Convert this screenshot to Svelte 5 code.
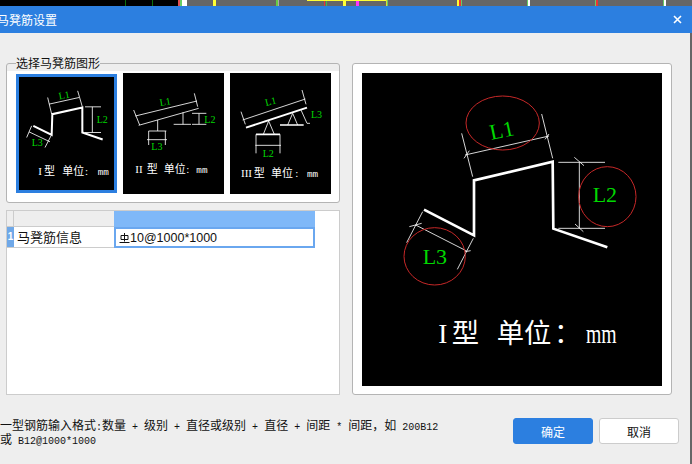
<script>
  // screen behind the dialog: [x, width, colour]
  const ticks = [
    [125, 1, '#0a6e0a'], [152, 1, '#0a6e0a'], [178, 2, '#e05050'], [180, 2, '#66cc66'], [182, 5, '#ffffff'],
    [213, 3, '#ffff33'], [276, 2, '#66cc44'], [278, 1, '#aaaaaa'], [324, 1, '#ee3333'], [326, 1, '#44bb44'],
    [343, 3, '#ffff33'], [356, 3, '#ff33ff'], [386, 1, '#dddd33'], [387, 1, '#66cc66'], [457, 2, '#ffff33'],
    [459, 2, '#ee3333'], [461, 1, '#66cc66'], [527, 1, '#66cc66'], [528, 2, '#ffffff'], [595, 1, '#66cc66'],
    [596, 2, '#ee3333'], [663, 1, '#66cc66'], [664, 2, '#ffffff']
  ];

  const hint = [
    '一型钢筋输入格式:数量 + 级别 + 直径或级别 + 直径 + 间距 * 间距，如 200B12',
    '或 B12@1000*1000'
  ];

  // ascii is half width in the original font, so it gets its own run
  const runs = (s) => s.split(/([\x00-\x7f]+)/).filter(Boolean);
  const isAscii = (s) => /^[\x00-\x7f]+$/.test(s);
</script>

<div class="screen">
  <svg class="behind" width="692" height="6" viewBox="0 0 692 6" aria-hidden="true">
    <rect x="0" y="0" width="178" height="6" fill="#000" />
    {#each ticks as [x, w, c]}
      <rect {x} y="0" width={w} height="6" fill={c} />
    {/each}
    <rect x="307" y="0" width="79" height="1" fill="#ffff33" />
  </svg>

  <header class="titlebar">
    <span class="title">马凳筋设置</span>
    <svg class="close" width="9" height="9" viewBox="0 0 9 9" aria-hidden="true">
      <path d="M1 1 8 8M8 1 1 8" stroke="#fff" stroke-width="1.6" fill="none" />
    </svg>
  </header>

  <main class="body">
    <div class="content">
      <div class="left">
        <fieldset class="shapes">
          <legend>选择马凳筋图形</legend>
          <div class="thumbs">
            <div class="thumb selected">
              <svg viewBox="42 40 285 336" width="95" height="113" aria-hidden="true">
                <polyline class="bar" points="85,185 140,212 142,150 232,130 232,205 293,226" />
                <path class="dim" d="M128 100 140 150M218 80 232 128M132 120 222 100M240 128H288M240 205H288M262 128V205M80 185 65 220M138 215 120 250M72 203 135 233" />
                <text class="lbl" x="163" y="106" transform="rotate(-10 163 106)">L1</text>
                <text class="lbl" x="275" y="177">L2</text>
                <text class="lbl" x="80" y="246">L3</text>
                <text class="cap" y="332"><tspan x="100">I</tspan><tspan x="117">型</tspan><tspan x="172">单位</tspan><tspan x="240">:</tspan><tspan class="mm" x="278">mm</tspan></text>
              </svg>
            </div>
            <div class="thumb">
              <svg viewBox="9 24 301 363" width="101" height="121" aria-hidden="true">
                <path class="dim" d="M45 153 230 108M55 181 235 130M222 85 232 125M40 135 58 180M112 165V198M85 198H138M85 198V240M135 198V240M80 224H140M188 142V178M160 178H212M215 145H258M215 178H258M236 145V178" />
                <text class="lbl" x="120" y="123" transform="rotate(-10 120 123)">L1</text>
                <text class="lbl" x="252" y="175">L2</text>
                <text class="lbl" x="93" y="256">L3</text>
                <text class="cap" y="325"><tspan x="45">II</tspan><tspan x="79">型</tspan><tspan x="130">单位</tspan><tspan x="198">:</tspan><tspan class="mm" x="228">mm</tspan></text>
              </svg>
            </div>
            <div class="thumb">
              <svg viewBox="12 24 303 363" width="101" height="121" aria-hidden="true">
                <line class="bar" x1="60" y1="188" x2="243" y2="128" />
                <path class="dim" d="M50 165 238 102M45 140 58 178M228 75 240 118M128 168 112 208M128 168 145 208M200 145 185 180M200 145 215 180M90 208V265M162 208V265M88 241H165M225 135 243 175H252" />
                <path class="thick" d="M162 180H233M90 208H162" />
                <text class="lbl" x="120" y="123" transform="rotate(-14 120 123)">L1</text>
                <text class="lbl" x="255" y="159">L3</text>
                <text class="lbl" x="110" y="276">L2</text>
                <text class="cap" y="337"><tspan x="45">III</tspan><tspan x="83">型</tspan><tspan x="135">单位</tspan><tspan x="208">:</tspan><tspan class="mm" x="243">mm</tspan></text>
              </svg>
            </div>
          </div>
        </fieldset>

        <div class="table">
          <div class="cell corner"></div>
          <div class="cell head"></div>
          <div class="cell head active"></div>
          <div class="cell rownum">1</div>
          <div class="cell name">马凳筋信息</div>
          <div class="cell value">
            <svg width="11" height="11" viewBox="0 0 11 11" aria-hidden="true">
              <path d="M2 2.5H9V6.5H2ZM5.5 0V8.5M0.5 9.5H10.5" stroke="#111" fill="none" />
            </svg>10@1000*1000
          </div>
        </div>
      </div>

      <section class="preview">
        <svg viewBox="36 39 900 939" width="300" height="313" aria-hidden="true">
          <polyline class="bar big" points="222,449 372,526 372,361 608,305 610,506 772,562" />
          <path class="dim" d="M335 220 368 350M575 162 608 295M345 285 597 228M342 295 358 272M585 238 597 222M625 307H765M625 505H765M688 307V505M673 292 702 317M675 492 700 515M218 455 170 548M370 535 322 628M197 495 350 573M178 500 215 490M345 575 362 572" />
          <ellipse class="ring" cx="458" cy="189" rx="110" ry="81" />
          <ellipse class="ring" cx="772" cy="410" rx="86" ry="90" />
          <ellipse class="ring" cx="254" cy="589" rx="92" ry="86" />
          <text class="lbl large" x="424" y="240" transform="rotate(-12 424 240)">L1</text>
          <text class="lbl large" x="728" y="427">L2</text>
          <text class="lbl large" x="218" y="613">L3</text>
          <text class="cap large" y="850"><tspan x="265">I</tspan><tspan x="305">型</tspan><tspan x="440">单位</tspan><tspan x="612">：</tspan></text>
          <text class="cap large unit" x="708" y="850" textLength="92" lengthAdjust="spacingAndGlyphs">mm</text>
        </svg>
      </section>
    </div>

    <footer class="footer">
      <p class="hint">
        {#each hint as line}
          <span class="line">
            {#each runs(line) as r}
              <span class="run" class:ascii={isAscii(r)}>{r}</span>
            {/each}
          </span>
        {/each}
      </p>
      <div class="buttons">
        <button class="btn primary">确定</button>
        <button class="btn">取消</button>
      </div>
    </footer>
  </main>
</div>

<style>
:global(body) {
  margin: 0;
}
.screen {
  width: 692px;
  height: 464px;
  overflow: hidden;
  background: #666;
  font-family: "Noto Sans CJK SC", "Liberation Sans", sans-serif;
  color: #111;
  display: flex;
  flex-direction: column;
}
.behind {
  display: block;
  flex: none;
}
.titlebar {
  flex: none;
  height: 27px;
  background: #2c7fe0;
  color: #fff;
  display: flex;
  align-items: center;
  justify-content: space-between;
  padding: 0 10px 0 0;
}
.title {
  font-size: 12px;
  margin-left: -3px;
}
.body {
  flex: 1;
  margin-right: 2px;
  background: #eee;
  display: flex;
  flex-direction: column;
}
.content {
  display: flex;
  gap: 12px;
  padding: 23px 0 0 6px;
}
.left {
  width: 334px;
  display: flex;
  flex-direction: column;
  gap: 7px;
}
.shapes {
  margin: 0;
  min-width: 0;
  height: 147px;
  box-sizing: border-box;
  padding: 3px 9px 0;
  border: 1px solid #b4b4b4;
  border-radius: 3px;
  background: linear-gradient(#eee 7px, #fff 7px);
}
legend {
  margin-left: 0;
  padding: 0;
  font-size: 12px;
  line-height: 14px;
}
.thumbs {
  display: flex;
  align-items: center;
  gap: 6px;
}
.thumb {
  background: #000;
  flex: none;
  line-height: 0;
}
.thumb.selected {
  border: 3px solid #2c7fe0;
}
.table {
  height: 185px;
  box-sizing: border-box;
  border: 1px solid #ccc;
  background: #fff;
  display: grid;
  grid-template-columns: 7px 100px 201px;
  grid-template-rows: 16px 21px;
  align-content: start;
}
.cell {
  box-sizing: border-box;
}
.corner {
  background: #eee;
  border-right: 1px solid #ccc;
  border-bottom: 1px solid #ccc;
}
.head {
  background: #eee;
  border-bottom: 1px solid #ccc;
}
.head.active {
  background: #7fb8f8;
  border-bottom: none;
}
.rownum {
  background: #6fa8e8;
  color: #fff;
  font: bold 10px/20px "Liberation Sans", sans-serif;
  text-align: center;
  border-bottom: 1px solid #ccc;
}
.name {
  font-size: 13px;
  line-height: 20px;
  padding-left: 3px;
  border-bottom: 1px solid #ccc;
}
.value {
  border: 2px solid #6aa7ef;
  font: 12.5px/15px "Liberation Sans", sans-serif;
  padding: 1px 0 0 3px;
  display: flex;
  align-items: center;
}
.preview {
  margin-top: 7px;
  width: 320px;
  height: 332px;
  box-sizing: border-box;
  border: 1px solid #b4b4b4;
  border-radius: 3px;
  background: #fff;
  padding: 9px;
  line-height: 0;
}
.preview svg {
  background: #000;
}
.bar {
  fill: none;
  stroke: #fff;
  stroke-width: 6;
}
.bar.big {
  stroke-width: 8;
}
.thick {
  fill: none;
  stroke: #fff;
  stroke-width: 5;
}
.dim {
  fill: none;
  stroke: #fff;
  stroke-width: 2.5;
}
.ring {
  fill: none;
  stroke: #c62828;
  stroke-width: 3;
}
.lbl {
  fill: #00d800;
  font-family: "Liberation Serif", serif;
  font-size: 30px;
}
.lbl.large {
  font-size: 66px;
}
.cap {
  fill: #fff;
  font-family: "Liberation Serif", "Noto Sans CJK SC", serif;
  font-size: 33px;
}
.cap.large {
  font-size: 82px;
}
.cap.unit {
  font-family: "Liberation Serif", serif;
  font-size: 84px;
}
.cap .mm {
  font-family: "Liberation Mono", monospace;
  font-size: 28px;
}
.footer {
  flex: 1;
  display: flex;
  justify-content: space-between;
  align-items: flex-start;
  padding: 23px 11px 0 0;
}
.hint {
  margin: 0;
  font-size: 12px;
}
.line {
  display: block;
  height: 14px;
  line-height: 14px;
  white-space: pre;
}
.run {
  display: inline-block;
  line-height: 14px;
}
.ascii {
  font-family: "Liberation Mono", monospace;
  font-size: 10px;
}
.buttons {
  display: flex;
  gap: 6px;
}
.btn {
  width: 80px;
  height: 26px;
  box-sizing: border-box;
  border: 1px solid #ccc;
  border-radius: 3px;
  background: #fff;
  color: #111;
  font: 12px "Noto Sans CJK SC", sans-serif;
  padding: 0;
}
.btn.primary {
  background: #2c7fe0;
  border-color: #2c7fe0;
  color: #fff;
}
</style>
